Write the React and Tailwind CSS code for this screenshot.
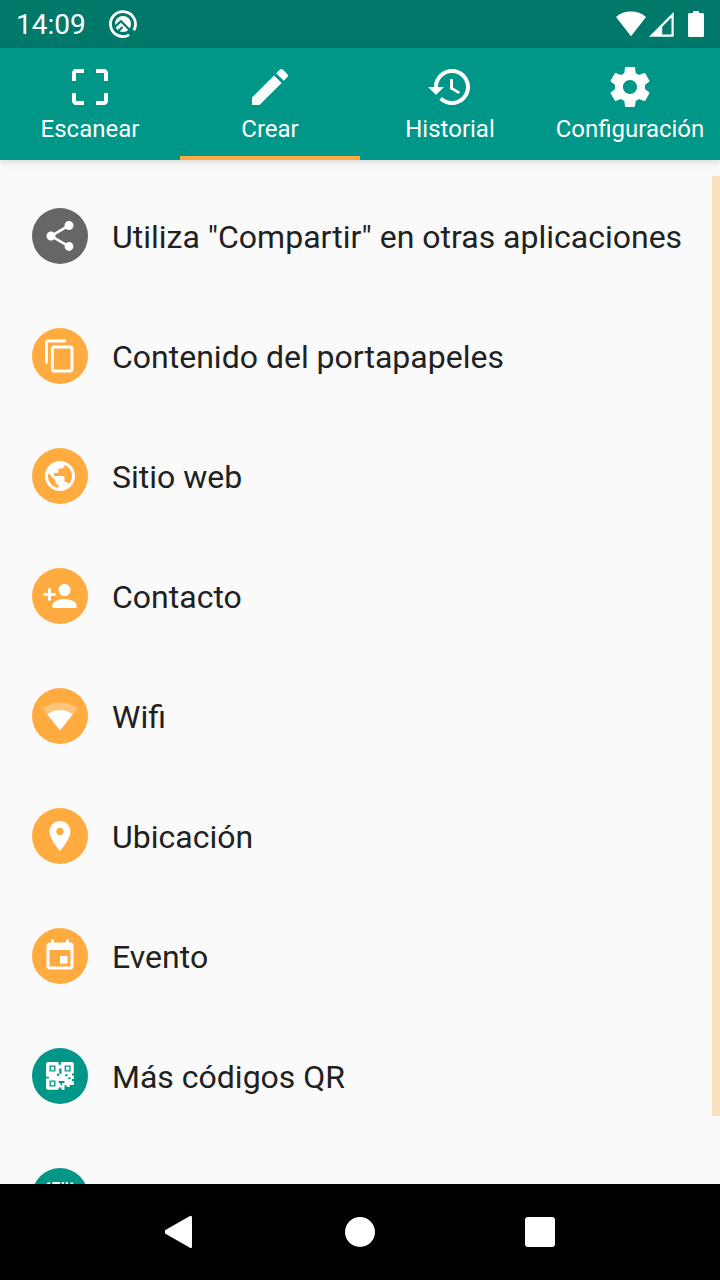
import React, { useState } from "react";

const PATHS = {
  scan: "M3 5v4h2V5h4V3H5c-1.1 0-2 .9-2 2zm2 10H3v4c0 1.1.9 2 2 2h4v-2H5v-4zm14 4h-4v2h4c1.1 0 2-.9 2-2v-4h-2v4zm0-16h-4v2h4v4h2V5c0-1.1-.9-2-2-2z",
  edit: "M3 17.25V21h3.75L17.81 9.94l-3.75-3.75L3 17.25zM20.71 7.04c.39-.39.39-1.02 0-1.41l-2.34-2.34c-.39-.39-1.02-.39-1.41 0l-1.83 1.83 3.75 3.75 1.83-1.83z",
  history:
    "M13 3c-4.97 0-9 4.03-9 9H1l3.89 3.89.07.14L9 12H6c0-3.87 3.13-7 7-7s7 3.13 7 7-3.13 7-7 7c-1.93 0-3.68-.79-4.94-2.06l-1.42 1.42C8.27 19.99 10.51 21 13 21c4.97 0 9-4.03 9-9s-4.03-9-9-9zm-1 5v5l4.28 2.54.72-1.21-3.5-2.08V8H12z",
  settings:
    "M19.43 12.98c.04-.32.07-.64.07-.98s-.03-.66-.07-.98l2.11-1.65c.19-.15.24-.42.12-.64l-2-3.46c-.12-.22-.39-.3-.61-.22l-2.49 1c-.52-.4-1.08-.73-1.69-.98l-.38-2.65C14.46 2.18 14.25 2 14 2h-4c-.25 0-.46.18-.49.42l-.38 2.65c-.61.25-1.17.59-1.69.98l-2.49-1c-.23-.09-.49 0-.61.22l-2 3.46c-.13.22-.07.49.12.64l2.11 1.65c-.04.32-.07.65-.07.98s.03.66.07.98l-2.11 1.65c-.19.15-.24.42-.12.64l2 3.46c.12.22.39.3.61.22l2.49-1c.52.4 1.08.73 1.69.98l.38 2.65c.03.24.24.42.49.42h4c.25 0 .46-.18.49-.42l.38-2.65c.61-.25 1.17-.59 1.69-.98l2.49 1c.23.09.49 0 .61-.22l2-3.46c.12-.22.07-.49-.12-.64l-2.11-1.65zM12 15.5c-1.93 0-3.5-1.57-3.5-3.5s1.57-3.5 3.5-3.5 3.5 1.57 3.5 3.5-1.57 3.5-3.5 3.5z",
  share:
    "M18 16.08c-.76 0-1.44.3-1.96.77L8.91 12.7c.05-.23.09-.46.09-.7s-.04-.47-.09-.7l7.05-4.11c.54.5 1.25.81 2.04.81 1.66 0 3-1.34 3-3s-1.34-3-3-3-3 1.34-3 3c0 .24.04.47.09.7L8.04 9.81C7.5 9.31 6.79 9 6 9c-1.66 0-3 1.34-3 3s1.34 3 3 3c.79 0 1.5-.31 2.04-.81l7.12 4.16c-.05.21-.08.43-.08.65 0 1.61 1.31 2.92 2.92 2.92s2.92-1.31 2.92-2.92-1.31-2.92-2.92-2.92z",
  copy: "M16 1H4c-1.1 0-2 .9-2 2v14h2V3h12V1zm3 4H8c-1.1 0-2 .9-2 2v14c0 1.1.9 2 2 2h11c1.1 0 2-.9 2-2V7c0-1.1-.9-2-2-2zm0 16H8V7h11v14z",
  globe:
    "M12 2C6.48 2 2 6.48 2 12s4.48 10 10 10 10-4.48 10-10S17.52 2 12 2zm-1 17.93c-3.95-.49-7-3.85-7-7.93 0-.62.08-1.21.21-1.79L9 15v1c0 1.1.9 2 2 2v1.93zm6.9-2.54c-.26-.81-1-1.39-1.9-1.39h-1v-3c0-.55-.45-1-1-1H8v-2h2c.55 0 1-.45 1-1V7h2c1.1 0 2-.9 2-2v-.41c2.93 1.19 5 4.06 5 7.41 0 2.08-.8 3.97-2.1 5.39z",
  contact:
    "M15 12c2.21 0 4-1.79 4-4s-1.79-4-4-4-4 1.79-4 4 1.79 4 4 4zm-9-2V7H4v3H1v2h3v3h2v-3h3v-2H6zm9 4c-2.67 0-8 1.34-8 4v2h16v-2c0-2.66-5.33-4-8-4z",
  place:
    "M12 2C8.13 2 5 5.13 5 9c0 5.25 7 13 7 13s7-7.75 7-13c0-3.87-3.13-7-7-7zm0 9.5c-1.38 0-2.5-1.12-2.5-2.5s1.12-2.5 2.5-2.5 2.5 1.12 2.5 2.5-1.12 2.5-2.5 2.5z",
  event:
    "M17 12h-5v5h5v-5zM16 1v2H8V1H6v2H5c-1.11 0-1.99.9-1.99 2L3 19c0 1.1.89 2 2 2h14c1.1 0 2-.9 2-2V5c0-1.1-.9-2-2-2h-1V1h-2zm3 18H5V8h14v11z",
};

function Icon({ name, className }) {
  return (
    <svg viewBox="0 0 24 24" className={className} fill="currentColor" aria-hidden="true">
      {name === "wifi" ? (
        <>
          <path
            fillOpacity=".3"
            d="M12.01 21.49L23.64 7c-.45-.34-4.93-4-11.64-4C5.28 3 .81 6.66.36 7l11.63 14.49.01.01.01-.01z"
          />
          <path d="M3.53 10.95l8.46 10.54.01.01.01-.01 8.46-10.54C20.04 10.62 16.81 8 12 8c-4.81 0-8.04 2.62-8.47 2.95z" />
        </>
      ) : name === "qr" ? (
        <path
          fillRule="evenodd"
          d="M4 2.700H11V4.500H12.600V2.700H20q1.200 0 1.200 1.200V10.300H20V11.700H21.200V14H20V15.500H21.200V18H18.500V19.300H16.500V18.200H15V21.200H13V19.600H11.300V20q0 1.200-1.200 1.200H4q-1.300 0-1.300-1.200V13.600H4.600V12.500H2.700V4q0-1.300 1.300-1.300zM5 5v4H9V5zM15.100 5v4H19.100V5zM5 15v4H9V15zM11.500 7H13v3.500h-1.500zM10 10.500h1.500v1.300H10zM15.500 10.800H17v1.300h-1.500zM17.500 12.800H19v1.300h-1.500zM11.200 15.300H15V16.600H13.500V18.200H12.300V16.600H11.200zM5.900 5.900h2.200v2.200H5.900zM16 5.900h2.200v2.200H16zM5.900 15.900h2.200v2.200H5.900z"
        />
      ) : name === "barcode" ? (
        <path d="M3.500 3H5.500V21H3.500zM7 2.700h5V21H7zM13.200 2.700h1.400V21h-1.400zM15.800 2.700h1.500V21h-1.500zM19 3h1.800v18H19z" />
      ) : (
        <path d={PATHS[name]} />
      )}
    </svg>
  );
}

const TABS = [
  { icon: "scan", label: "Escanear" },
  { icon: "edit", label: "Crear" },
  { icon: "history", label: "Historial" },
  { icon: "settings", label: "Configuración" },
];

const ITEMS = [
  { icon: "share", label: 'Utiliza "Compartir" en otras aplicaciones', color: "bg-[#666666]" },
  { icon: "copy", label: "Contenido del portapapeles", color: "bg-[#ffab40]" },
  { icon: "globe", label: "Sitio web", color: "bg-[#ffab40]" },
  { icon: "contact", label: "Contacto", color: "bg-[#ffab40]" },
  { icon: "wifi", label: "Wifi", color: "bg-[#ffab40]" },
  { icon: "place", label: "Ubicación", color: "bg-[#ffab40]" },
  { icon: "event", label: "Evento", color: "bg-[#ffab40]" },
  { icon: "qr", label: "Más códigos QR", color: "bg-[#009688]" },
  { icon: "barcode", ariaLabel: "Códigos de barras", color: "bg-[#009688]" },
];

function StatusBar() {
  return (
    <div className="flex h-12 shrink-0 items-center justify-between bg-[#00796b] px-4 text-white">
      <div className="flex items-center gap-[22px]">
        <span className="pt-0.5 text-[28px] leading-8">14:09</span>
        <svg viewBox="0 0 30 30" className="size-[30px]" fill="none" aria-hidden="true">
          <circle cx="15" cy="15" r="8" fill="currentColor" />
          <path d="M21.200 25.900A12.500 12.500 0 1 1 25.800 21.300" stroke="currentColor" strokeWidth="2.800" />
          <path d="M5.500 18.800L13 12.200L25.300 24.600M10 22.500L14.500 18" stroke="#00796b" strokeWidth="2.200" />
        </svg>
      </div>
      <svg viewBox="0 0 88 28" className="h-7 w-[88px]" fill="currentColor" aria-hidden="true">
        <path d="M0 7C8 -.2 22 -.2 30 7L15 26.200z" />
        <path fillRule="evenodd" d="M33 26.700L57.700 2v24.700zM46.200 24.500h9.300V7.500l-9.300 9.300z" />
        <path d="M77 1h6v2h3.500Q88 3 88 4.500v21q0 1.500-1.500 1.500h-13Q72 27 72 25.500v-21Q72 3 73.500 3H77z" />
      </svg>
    </div>
  );
}

export default function App() {
  const [active, setActive] = useState(1);
  return (
    <div className="flex h-screen flex-col bg-[#fafafa] font-[Roboto,sans-serif]">
      <StatusBar />
      <nav className="z-10 grid h-28 shrink-0 grid-cols-4 bg-[#009688] text-white shadow-[0_2px_8px_rgba(0,0,0,0.14)]">
        {TABS.map((tab, i) => (
          <button
            key={tab.label}
            type="button"
            onClick={() => setActive(i)}
            className={
              i === active
                ? "flex flex-col items-center border-b-4 border-[#ffab40] pt-[15px]"
                : "flex flex-col items-center border-b-4 border-transparent pt-[15px]"
            }
          >
            <Icon name={tab.icon} className="size-12 shrink-0" />
            <span className="mt-1 text-[24px] leading-7">{tab.label}</span>
          </button>
        ))}
      </nav>
      <main className="relative min-h-0 flex-1 overflow-hidden pt-4">
        <ul>
          {ITEMS.map((item) => (
            <li key={item.icon}>
              <button
                type="button"
                aria-label={item.ariaLabel}
                className="flex h-[120px] w-full items-center gap-6 px-8 text-left"
              >
                <span className={`flex size-14 shrink-0 items-center justify-center rounded-full text-white ${item.color}`}>
                  <Icon name={item.icon} className="size-9" />
                </span>
                {item.label && (
                  <span className="pt-0.5 text-[32px] leading-10 whitespace-nowrap text-[#212121]">{item.label}</span>
                )}
              </button>
            </li>
          ))}
        </ul>
        <div className="absolute top-4 right-0 h-[calc(100%-84px)] w-2 bg-[#fbe0bd]" />
      </main>
      <div className="grid h-24 shrink-0 grid-cols-[1fr_180px_180px_180px_1fr] items-center bg-black text-white">
        <button type="button" aria-label="Atrás" className="col-start-2 flex justify-center">
          <svg viewBox="2 0 30 34" className="h-[34px] w-[30px]" fill="currentColor" aria-hidden="true">
            <path d="M2 15.300L26.500 1.200Q29 0 29 2.500v29Q29 34 26.500 32.500L2 18.500q-2-1.600 0-3.200z" />
          </svg>
        </button>
        <button type="button" aria-label="Inicio" className="flex justify-center">
          <span className="size-[30px] rounded-full bg-white" />
        </button>
        <button type="button" aria-label="Recientes" className="flex justify-center">
          <span className="size-[30px] rounded-[3px] bg-white" />
        </button>
      </div>
    </div>
  );
}
